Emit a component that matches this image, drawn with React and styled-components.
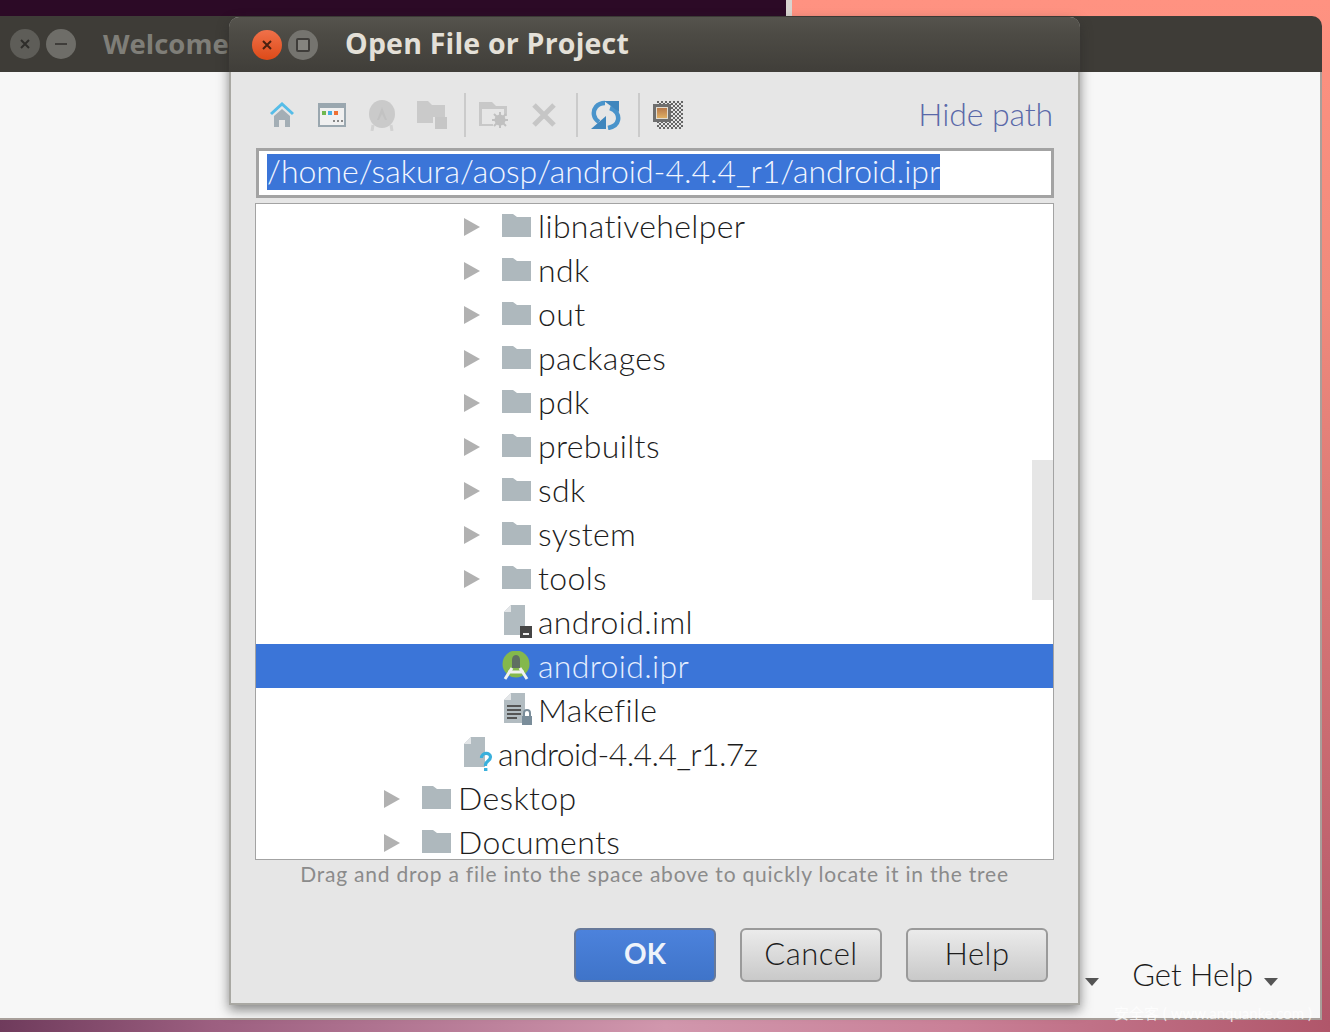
import React from 'react';
import styled, { createGlobalStyle } from 'styled-components';

const GlobalStyle = createGlobalStyle`
  html, body { margin: 0; padding: 0; height: 100%; overflow: hidden; }
  body { font-family: 'Lato', 'Open Sans', sans-serif; }
`;

const Desktop = styled.div`
  position: relative;
  width: 1330px;
  height: 1032px;
  overflow: hidden;
  background:
    linear-gradient(90deg, #6f3b5c 0, #9c5f80 16%, #d197ad 50%, #c98097 72%, #b0566a 100%) bottom / 100% 12px no-repeat,
    linear-gradient(180deg, #ff9281 0, #f08a7c 300px, #b0566a 1032px);
`;

/* the other windows on the desktop */
const PurpleWindow = styled.div`
  position: absolute;
  left: 0;
  top: 0;
  width: 786px;
  height: 16px;
  background: #2c0a26;
  border-right: 6px solid #d8d4d0;
`;

const BackWindow = styled.div`
  position: absolute;
  left: 0;
  top: 16px;
  width: 1322px;
  height: 1004px;
  display: flex;
  flex-direction: column;
  border-top-right-radius: 10px;
  overflow: hidden;
`;

const BackTitle = styled.div`
  height: 56px;
  flex: none;
  display: flex;
  align-items: center;
  padding-left: 10px;
  background: #3e3c37;
`;

const WelcomeTitle = styled.div`
  margin: -2px 0 0 21px;
  white-space: nowrap;
  font-family: 'Open Sans', sans-serif;
  font-weight: 700;
  font-size: 27.5px;
  color: #7f7e78;
`;

const BackBody = styled.div`
  flex: 1;
  display: flex;
  flex-direction: column;
  background: #f7f7f7;
  border-bottom: 2px solid #a89f9a;
  border-right: 2px solid #a89f9a;
`;

const WinDot = styled.div`
  width: 30px;
  height: 30px;
  margin-right: 6px;
  flex: none;
  border-radius: 50%;
  display: flex;
  align-items: center;
  justify-content: center;
  background: ${p => p.$bg};
`;

const BackFooter = styled.div`
  margin-top: auto;
  display: flex;
  align-items: center;
  justify-content: flex-end;
  height: 30px;
  margin-bottom: 29px;
  padding-right: 42px;
`;

const GetHelp = styled.span`
  font-size: 31px;
  font-weight: 300;
  color: #1c1c1c;
  margin: 0 11px 0 33px;
`;

const Caret = styled.span`
  display: block;
  width: 0;
  height: 0;
  margin-top: 16px;
  border-left: 7px solid transparent;
  border-right: 7px solid transparent;
  border-top: 8px solid #555;
`;

const Watermark = styled.div`
  position: absolute;
  left: 1114px;
  top: 1002px;
  font-family: 'Lato', 'Noto Sans CJK SC', sans-serif;
  font-size: 15px;
  color: rgba(255, 255, 255, 0.75);
  white-space: nowrap;
`;

/* dialog */
const Dialog = styled.div`
  position: absolute;
  left: 229px;
  top: 17px;
  width: 851px;
  height: 988px;
  box-sizing: border-box;
  display: flex;
  flex-direction: column;
  background: #e6e6e6;
  border: 2px solid #a9a8a3;
  border-top: none;
  border-radius: 10px 10px 0 0;
  box-shadow: 0 5px 12px rgba(40, 40, 40, 0.55);
`;

const DialogTitle = styled.div`
  margin: 0 -2px;
  height: 55px;
  flex: none;
  display: flex;
  align-items: center;
  padding-left: 23px;
  border-radius: 10px 10px 0 0;
  background: linear-gradient(180deg, #55534d 0, #4d4b45 30%, #403e39 100%);
`;

const DialogHeading = styled.div`
  margin: -3px 0 0 21px;
  font-family: 'Open Sans', sans-serif;
  font-weight: 700;
  font-size: 28.5px;
  letter-spacing: 0.2px;
  color: #e4e0d8;
`;

const Toolbar = styled.div`
  display: flex;
  align-items: center;
  height: 48px;
  margin-top: 19px;
  padding: 0 25px 0 26px;
`;

const ToolSlot = styled.div`
  width: 50px;
  height: 40px;
  flex: none;
  display: flex;
  align-items: center;
  justify-content: center;
`;

const ToolSep = styled.div`
  width: 2px;
  height: 44px;
  background: #cbcbcb;
  margin: 0 3px 0 7px;
  flex: none;
`;

const HidePath = styled.a`
  margin: 0 0 4px auto;
  font-size: 32px;
  font-weight: 300;
  letter-spacing: -0.1px;
  color: #5a69a9;
`;

const PathField = styled.div`
  margin: 9px 24px 0 25px;
  height: 50px;
  box-sizing: border-box;
  border: 3px solid #a3a3a3;
  background: #fff;
  padding: 3px 0 0 8px;
  font-size: 32px;
  line-height: 33px;
  font-weight: 300;
  white-space: nowrap;
`;

const Selected = styled.span`
  display: inline-block;
  height: 36px;
  background: #3b75d8;
  color: #f2f6ff;
`;

const Tree = styled.div`
  position: relative;
  margin: 5px 24px 0 24px;
  height: 657px;
  box-sizing: border-box;
  border: 1px solid #a3a3a3;
  background: #fff;
  overflow: hidden;
`;

const Row = styled.div`
  display: flex;
  align-items: center;
  height: 44px;
  padding-left: ${p => p.$indent}px;
  background: ${p => (p.$selected ? '#3b75d8' : 'transparent')};
  color: ${p => (p.$selected ? '#e6efff' : '#1d1d1d')};
  font-size: 32px;
  font-weight: 300;
  letter-spacing: ${p => p.$ls}px;
  white-space: nowrap;
`;

const RowLabel = styled.span`
  margin-top: -2px;
`;

const ArrowSlot = styled.div`
  width: 38px;
  flex: none;
  display: flex;
  align-items: center;
  margin-top: 1px;
`;

const IconSlot = styled.div`
  width: 36px;
  flex: none;
  display: flex;
  align-items: center;
  margin-top: -1px;
`;

const Scrollbar = styled.div`
  position: absolute;
  right: 0;
  top: 256px;
  width: 21px;
  height: 140px;
  background: #e6e6e6;
`;

const Hint = styled.div`
  height: 28px;
  line-height: 28px;
  text-align: center;
  font-size: 21px;
  letter-spacing: 0.78px;
  color: #8b8b8b;
`;

const Buttons = styled.div`
  display: flex;
  justify-content: flex-end;
  gap: 24px;
  margin-top: 40px;
  padding-right: 30px;
`;

const Button = styled.button`
  width: 142px;
  height: 54px;
  box-sizing: border-box;
  border-radius: 6px;
  font-family: 'Lato', sans-serif;
  font-size: ${p => (p.$primary ? 28 : 31)}px;
  font-weight: ${p => (p.$primary ? 700 : 300)};
  letter-spacing: ${p => (p.$primary ? 0 : 0.5)}px;
  padding: 0 0 4px;
  color: ${p => (p.$primary ? '#eef3fb' : '#1d1d1d')};
  border: 2px solid ${p => (p.$primary ? '#67799a' : '#9a9a9a')};
  background: ${p =>
    p.$primary
      ? 'linear-gradient(180deg, #4c82dc, #3f74c9)'
      : 'linear-gradient(180deg, #ebebeb, #c9c9c9)'};
`;

/* little drawings */
const CloseGlyph = ({ color }) => (
  <svg width="14" height="14" viewBox="0 0 14 14">
    <path d="M3 3l8 8M11 3l-8 8" stroke={color} strokeWidth="2" />
  </svg>
);

const MinGlyph = () => (
  <svg width="14" height="14" viewBox="0 0 14 14">
    <path d="M1 7h12" stroke="#3f3d3a" strokeWidth="2" />
  </svg>
);

const MaxGlyph = () => (
  <svg width="16" height="16" viewBox="0 0 16 16">
    <rect x="2" y="2" width="12" height="12" rx="1" fill="#85847f" stroke="#3f3d3a" strokeWidth="2" />
  </svg>
);

const HomeIcon = () => (
  <svg width="26" height="26" viewBox="0 0 26 26">
    <path d="M2 12L13 2l11 10" fill="none" stroke="#56bde8" strokeWidth="3" />
    <path d="M5 14l8-7 8 7v11h-5v-7h-6v7H5z" fill="#a3aeb5" />
  </svg>
);

const WindowIcon = () => (
  <svg width="28" height="24" viewBox="0 0 28 24">
    <rect x="1" y="1" width="26" height="22" fill="#f0f0f0" stroke="#9aa7af" strokeWidth="2" />
    <rect x="1" y="1" width="26" height="4" fill="#9aa7af" />
    <rect x="4" y="8" width="4" height="4" fill="#70b84f" />
    <rect x="10" y="8" width="4" height="4" fill="#47aee0" />
    <rect x="16" y="8" width="4" height="4" fill="#ee7034" />
    <path d="M15 18h2M19 18h2M23 18h2" stroke="#888" strokeWidth="2" />
  </svg>
);

const DroidIcon = () => (
  <svg width="28" height="32" viewBox="0 0 28 32">
    <ellipse cx="14" cy="15" rx="13" ry="14" fill="#cacaca" />
    <path d="M14 8l-5 13h2l3-6 3 6h2z" fill="#c2c2c2" />
    <path d="M5 26l-1 6M23 26l1 6" stroke="#d2d2d2" strokeWidth="3" />
  </svg>
);

const FoldersIcon = () => (
  <svg width="30" height="28" viewBox="0 0 30 28">
    <path d="M0 0h11l4 4h13v12H16v6H0z" fill="#cacaca" />
    <rect x="18" y="16" width="12" height="12" fill="#c6c6c6" />
  </svg>
);

const FolderGearIcon = () => (
  <svg width="32" height="28" viewBox="0 0 32 28">
    <path fillRule="evenodd" d="M1 1h13l4 4h11v10h-3V8H4v15h11v2H1z" fill="#c8c8c8" />
    <circle cx="22" cy="19" r="5.5" fill="#c0c0c0" />
    <path d="M22 11v16M14 19h16M16 13l12 12M28 13L16 25" stroke="#c0c0c0" strokeWidth="2" />
  </svg>
);

const CrossIcon = () => (
  <svg width="26" height="26" viewBox="0 0 26 26">
    <path d="M3 3l20 20M23 3L3 23" stroke="#c6c6c6" strokeWidth="5" />
  </svg>
);

const SyncIcon = () => (
  <svg width="30" height="30" viewBox="0 0 30 30">
    <path d="M14 3C6 3 2 9 3 15c.5 3 2 5 5 7" fill="none" stroke="#4a94cb" strokeWidth="4.5" />
    <path d="M0 29h15V16z" fill="#3f86bd" />
    <path d="M19 8c6 2 9 7 8 12-1 5-5 7-10 8" fill="none" stroke="#4a94cb" strokeWidth="4.5" />
    <path d="M13 1h15v11z" fill="#3f86bd" />
  </svg>
);

const ChipIcon = () => (
  <svg width="30" height="28" viewBox="0 0 30 28">
    <defs>
      <pattern id="checks" width="4" height="4" patternUnits="userSpaceOnUse">
        <rect width="2" height="2" fill="#666" />
        <rect x="2" y="2" width="2" height="2" fill="#666" />
      </pattern>
      <linearGradient id="amber" x1="0" y1="0" x2="0" y2="1">
        <stop offset="0" stopColor="#b8794a" />
        <stop offset="1" stopColor="#dfae63" />
      </linearGradient>
    </defs>
    <rect x="4" y="0" width="26" height="28" fill="url(#checks)" />
    <rect x="1.5" y="4.5" width="15" height="15" fill="#e2dccf" stroke="#6e6e6e" strokeWidth="3" />
    <rect x="4" y="7" width="10" height="10" fill="url(#amber)" />
  </svg>
);

const Arrow = () => (
  <svg width="16" height="18" viewBox="0 0 16 18">
    <path d="M0 0l16 9L0 18z" fill="#b1b1b1" />
  </svg>
);

const Folder = () => (
  <svg width="29" height="23" viewBox="0 0 29 23">
    <path d="M0 0h11l4 3h14v20H0z" fill="#aeb8bd" />
  </svg>
);

const FileSheet = ({ children }) => (
  <svg width="31" height="34" viewBox="0 0 31 34">
    <path d="M2 7l7-7h14v30H2z" fill="#b2bcc1" />
    <path d="M2 7h7V0z" fill="#e3e6e8" />
    {children}
  </svg>
);

const ImlIcon = () => (
  <FileSheet>
    <rect x="18" y="21" width="12" height="12" fill="#454545" />
    <rect x="21" y="28" width="6" height="2" fill="#eee" />
  </FileSheet>
);

const MakeIcon = () => (
  <FileSheet>
    <path d="M5 13h14M5 17h14M5 21h14M5 25h10" stroke="#555" strokeWidth="2" />
    <rect x="20" y="23" width="10" height="9" fill="#7a8d9a" />
    <path d="M22 23v-3a3 3 0 0 1 6 0v3" fill="none" stroke="#7a8d9a" strokeWidth="2" />
  </FileSheet>
);

const UnknownIcon = () => (
  <FileSheet>
    <path d="M19.5 21c0-6 9-6 9-1 0 4-5 4-5 8v1" fill="none" stroke="#39b0dc" strokeWidth="3.2" />
    <rect x="22" y="31" width="3.4" height="3" fill="#39b0dc" />
  </FileSheet>
);

const ProjectIcon = () => (
  <svg width="30" height="30" viewBox="0 0 30 30">
    <circle cx="14" cy="13" r="13.5" fill="#84b84c" />
    <path d="M14 4c3 0 4 3 4 5v8h-8V9c0-2 1-5 4-5z" fill="#5f6f62" />
    <path d="M10 17L3 28M18 17l7 11M6 21h16" stroke="#f0f2f0" strokeWidth="3" fill="none" />
  </svg>
);

const TreeRow = ({ indent, name, icon, arrow, selected, ls = 0.35 }) => (
  <Row $indent={indent} $selected={selected} $ls={ls}>
    {arrow && <ArrowSlot><Arrow /></ArrowSlot>}
    <IconSlot>{icon}</IconSlot>
    <RowLabel>{name}</RowLabel>
  </Row>
);

const folders = ['libnativehelper', 'ndk', 'out', 'packages', 'pdk', 'prebuilts', 'sdk', 'system', 'tools'];

export default function App() {
  return (
    <Desktop>
      <GlobalStyle />
      <PurpleWindow />
      <BackWindow>
        <BackTitle>
          <WinDot $bg="#5e5d58"><CloseGlyph color="#2e2d2a" /></WinDot>
          <WinDot $bg="#6e6d68"><MinGlyph /></WinDot>
          <WelcomeTitle>Welcome</WelcomeTitle>
        </BackTitle>
        <BackBody>
          <BackFooter>
            <Caret />
            <GetHelp>Get Help</GetHelp>
            <Caret />
          </BackFooter>
        </BackBody>
      </BackWindow>
      <Dialog>
        <DialogTitle>
          <WinDot $bg="linear-gradient(180deg, #f0714a, #dd4a18)"><CloseGlyph color="#4a2010" /></WinDot>
          <WinDot $bg="#75746f"><MaxGlyph /></WinDot>
          <DialogHeading>Open File or Project</DialogHeading>
        </DialogTitle>
        <Toolbar>
          <ToolSlot><HomeIcon /></ToolSlot>
          <ToolSlot><WindowIcon /></ToolSlot>
          <ToolSlot><DroidIcon /></ToolSlot>
          <ToolSlot><FoldersIcon /></ToolSlot>
          <ToolSep />
          <ToolSlot><FolderGearIcon /></ToolSlot>
          <ToolSlot><CrossIcon /></ToolSlot>
          <ToolSep />
          <ToolSlot><SyncIcon /></ToolSlot>
          <ToolSep />
          <ToolSlot><ChipIcon /></ToolSlot>
          <HidePath>Hide path</HidePath>
        </Toolbar>
        <PathField>
          <Selected>/home/sakura/aosp/android-4.4.4_r1/android.ipr</Selected>
        </PathField>
        <Tree>
          {folders.map(name => (
            <TreeRow key={name} indent={208} arrow name={name} icon={<Folder />} />
          ))}
          <TreeRow indent={246} name="android.iml" icon={<ImlIcon />} />
          <TreeRow indent={246} name="android.ipr" icon={<ProjectIcon />} selected />
          <TreeRow indent={246} name="Makefile" icon={<MakeIcon />} />
          <TreeRow indent={206} name="android-4.4.4_r1.7z" icon={<UnknownIcon />} ls={-0.6} />
          <TreeRow indent={128} arrow name="Desktop" icon={<Folder />} />
          <TreeRow indent={128} arrow name="Documents" icon={<Folder />} />
          <Scrollbar />
        </Tree>
        <Hint>Drag and drop a file into the space above to quickly locate it in the tree</Hint>
        <Buttons>
          <Button $primary>OK</Button>
          <Button>Cancel</Button>
          <Button>Help</Button>
        </Buttons>
      </Dialog>
      <Watermark>安全客 ( www.anquanke.com )</Watermark>
    </Desktop>
  );
}
